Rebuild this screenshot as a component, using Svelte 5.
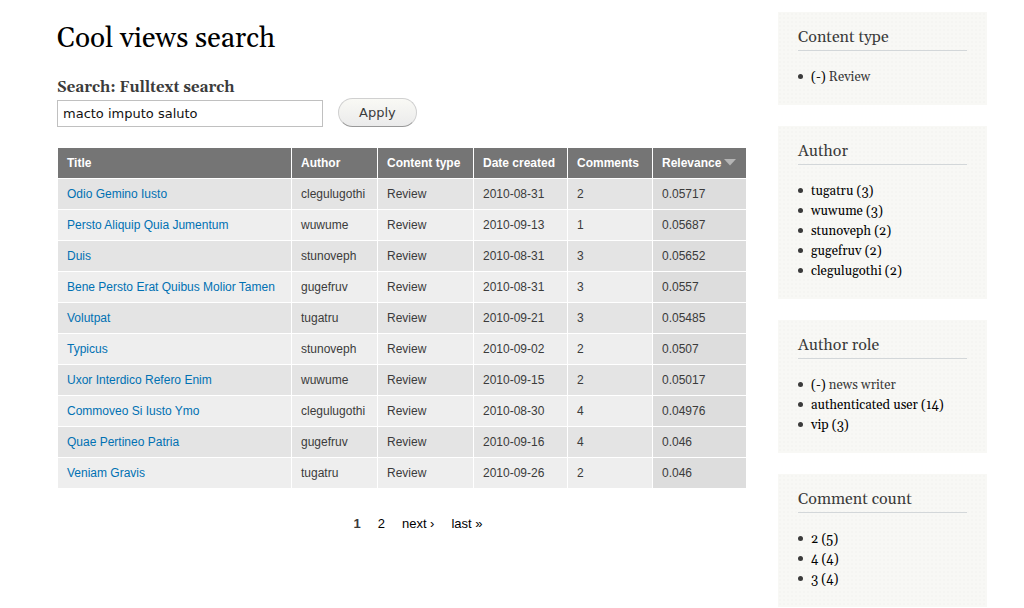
<script>
  let query = $state('macto imputo saluto');

  const columns = [
    { key: 'title', label: 'Title' },
    { key: 'author', label: 'Author' },
    { key: 'type', label: 'Content type' },
    { key: 'date', label: 'Date created' },
    { key: 'comments', label: 'Comments' },
    { key: 'relevance', label: 'Relevance' }
  ];

  const rows = [
    ['Odio Gemino Iusto', 'clegulugothi', 'Review', '2010-08-31', '2', '0.05717'],
    ['Persto Aliquip Quia Jumentum', 'wuwume', 'Review', '2010-09-13', '1', '0.05687'],
    ['Duis', 'stunoveph', 'Review', '2010-08-31', '3', '0.05652'],
    ['Bene Persto Erat Quibus Molior Tamen', 'gugefruv', 'Review', '2010-08-31', '3', '0.0557'],
    ['Volutpat', 'tugatru', 'Review', '2010-09-21', '3', '0.05485'],
    ['Typicus', 'stunoveph', 'Review', '2010-09-02', '2', '0.0507'],
    ['Uxor Interdico Refero Enim', 'wuwume', 'Review', '2010-09-15', '2', '0.05017'],
    ['Commoveo Si Iusto Ymo', 'clegulugothi', 'Review', '2010-08-30', '4', '0.04976'],
    ['Quae Pertineo Patria', 'gugefruv', 'Review', '2010-09-16', '4', '0.046'],
    ['Veniam Gravis', 'tugatru', 'Review', '2010-09-26', '2', '0.046']
  ];

  const facets = [
    { title: 'Content type', active: 'Review', links: [] },
    {
      title: 'Author',
      links: ['tugatru (3)', 'wuwume (3)', 'stunoveph (2)', 'gugefruv (2)', 'clegulugothi (2)']
    },
    { title: 'Author role', active: 'news writer', links: ['authenticated user (14)', 'vip (3)'] },
    { title: 'Comment count', links: ['2 (5)', '4 (4)', '3 (4)'] }
  ];
</script>

<div class="page">
  <main>
    <h1>Cool views search</h1>

    <form onsubmit={(e) => e.preventDefault()}>
      <label for="fulltext">Search: Fulltext search</label>
      <div class="controls">
        <input id="fulltext" type="text" bind:value={query} />
        <button type="submit">Apply</button>
      </div>
    </form>

    <table>
      <colgroup>
        {#each columns as col}
          <col class={col.key} />
        {/each}
      </colgroup>
      <thead>
        <tr>
          {#each columns as col}
            <th scope="col">
              <a href="#sort-{col.key}"
                >{col.label}{#if col.key === 'relevance'}<svg
                    width="12"
                    height="7"
                    viewBox="0 0 12 7"
                    aria-hidden="true"><path d="M0 0H12L6 6.5Z" fill="#b5b5b5" /></svg
                  >{/if}</a
              >
            </th>
          {/each}
        </tr>
      </thead>
      <tbody>
        {#each rows as row}
          <tr>
            {#each row as cell, i}
              <td class:active={i === 5}>
                {#if i === 0}<a href="#node">{cell}</a>{:else}{cell}{/if}
              </td>
            {/each}
          </tr>
        {/each}
      </tbody>
    </table>

    <nav aria-label="Pages">
      <strong>1</strong>
      <a href="#page-2">2</a>
      <a href="#next">next ›</a>
      <a href="#last">last »</a>
    </nav>
  </main>

  <aside>
    {#each facets as facet}
      <section>
        <h2>{facet.title}</h2>
        <ul>
          {#if facet.active}
            <li><a href="#remove">(-)</a> {facet.active}</li>
          {/if}
          {#each facet.links as link}
            <li><a href="#facet">{link}</a></li>
          {/each}
        </ul>
      </section>
    {/each}
  </aside>
</div>

<style>
  :global(body) {
    background: #fff;
  }

  .page {
    display: grid;
    grid-template-columns: minmax(0, 1fr) 209px;
    gap: 31px;
    align-items: start;
    padding: 12px 37px 0 57px;
    color: #3b3b3b;
    font-family: Georgia, Gelasio, "Liberation Serif", serif;
  }

  a {
    color: #000;
    text-decoration: none;
  }

  h1 {
    margin: 0;
    padding-top: 10px;
    font-size: 28px;
    line-height: 34px;
    font-weight: 400;
    color: #000;
  }

  label {
    display: block;
    margin-top: 22px;
    font-size: 15px;
    line-height: 20px;
    font-weight: 700;
  }

  .controls {
    display: flex;
    align-items: flex-end;
    gap: 15px;
  }

  input {
    box-sizing: border-box;
    width: 266px;
    height: 27px;
    margin: 0;
    padding: 0 5px;
    border: 1px solid #c0c0c0;
    background: #fff;
    color: #111;
    font: 13px "DejaVu Sans", sans-serif;
  }

  button {
    box-sizing: border-box;
    height: 29px;
    padding: 0 20px;
    border: 1px solid #d0d0d0;
    border-bottom-color: #999;
    border-radius: 15px;
    background: linear-gradient(#f9f9f5, #ebebeb);
    color: #3b3b3b;
    font: 13px "DejaVu Sans", sans-serif;
  }

  table {
    width: 100%;
    margin-top: 20px;
    table-layout: fixed;
    border-spacing: 1px;
    font: 12px/18px "Liberation Sans", sans-serif;
  }

  col.author { width: 85px; }
  col.type { width: 95px; }
  col.date { width: 93px; }
  col.comments { width: 84px; }
  col.relevance { width: 93px; }

  th,
  td {
    padding: 6px 9px;
    text-align: left;
    white-space: nowrap;
  }

  th {
    padding-right: 0;
    background: #757575;
  }

  th a {
    color: #fff;
  }

  th svg {
    margin-left: 3px;
    vertical-align: 1px;
  }

  td {
    background: #eee;
  }

  td a {
    color: #0071b3;
  }

  tr:nth-child(odd) td {
    background: #e4e4e4;
  }

  tbody tr td.active {
    background: #ddd;
  }

  nav {
    display: flex;
    justify-content: center;
    gap: 17px;
    margin-top: 25px;
    padding-left: 32px;
    font: 13px/20px "Liberation Sans", sans-serif;
  }

  aside {
    display: grid;
    gap: 21px;
  }

  section {
    padding: 13px 20px 18px;
    background: radial-gradient(#f5f5f2 1px, transparent 1px) 0 0 / 4px 4px #f8f8f5;
  }

  h2 {
    margin: 0;
    padding-bottom: 1px;
    border-bottom: 1px solid #d3d7d9;
    font-size: 16px;
    line-height: 24px;
    font-weight: 400;
  }

  ul {
    margin: 16px 0 0;
    padding: 0 0 0 13px;
    list-style: none;
  }

  li {
    font-size: 13px;
    line-height: 20px;
  }

  li::before {
    content: "";
    display: inline-block;
    width: 5px;
    height: 5px;
    margin: 0 8px 0 -13px;
    border-radius: 50%;
    background: #3b3b3b;
    vertical-align: 2px;
  }
</style>
